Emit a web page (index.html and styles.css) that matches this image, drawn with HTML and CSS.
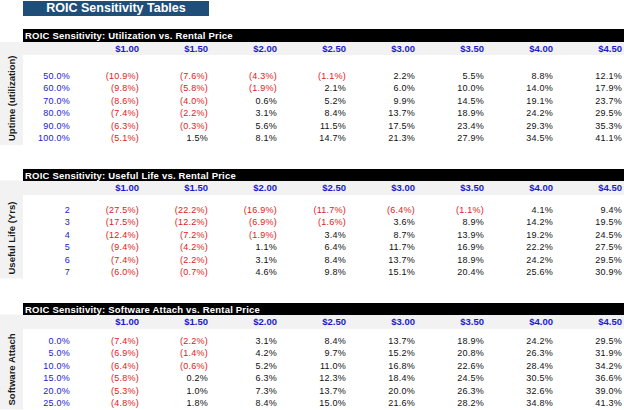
FILE: index.html
```html
<!DOCTYPE html>
<html>
<head>
<meta charset="utf-8">
<link rel="stylesheet" href="styles.css">
</head>
<body>
<div class="title">ROIC Sensitivity Tables</div>

<section class="tbl t1">
  <div class="bar">ROIC Sensitivity: Utilization vs. Rental Price</div>
  <div class="body">
    <div class="side"><span>Uptime (utilization)</span></div>
    <div class="main">
      <div class="prices"><span></span><span>$1.00</span><span>$1.50</span><span>$2.00</span><span>$2.50</span><span>$3.00</span><span>$3.50</span><span>$4.00</span><span>$4.50</span></div>
      <div class="sp sp1"></div>
      <div class="row"><span class="lbl">50.0%</span><span class="neg">(10.9%)</span><span class="neg">(7.6%)</span><span class="neg">(4.3%)</span><span class="neg">(1.1%)</span><span>2.2%</span><span>5.5%</span><span>8.8%</span><span>12.1%</span></div>
      <div class="row"><span class="lbl">60.0%</span><span class="neg">(9.8%)</span><span class="neg">(5.8%)</span><span class="neg">(1.9%)</span><span>2.1%</span><span>6.0%</span><span>10.0%</span><span>14.0%</span><span>17.9%</span></div>
      <div class="row"><span class="lbl">70.0%</span><span class="neg">(8.6%)</span><span class="neg">(4.0%)</span><span>0.6%</span><span>5.2%</span><span>9.9%</span><span>14.5%</span><span>19.1%</span><span>23.7%</span></div>
      <div class="row"><span class="lbl">80.0%</span><span class="neg">(7.4%)</span><span class="neg">(2.2%)</span><span>3.1%</span><span>8.4%</span><span>13.7%</span><span>18.9%</span><span>24.2%</span><span>29.5%</span></div>
      <div class="row"><span class="lbl">90.0%</span><span class="neg">(6.3%)</span><span class="neg">(0.3%)</span><span>5.6%</span><span>11.5%</span><span>17.5%</span><span>23.4%</span><span>29.3%</span><span>35.3%</span></div>
      <div class="row"><span class="lbl">100.0%</span><span class="neg">(5.1%)</span><span>1.5%</span><span>8.1%</span><span>14.7%</span><span>21.3%</span><span>27.9%</span><span>34.5%</span><span>41.1%</span></div>
    </div>
  </div>
</section>

<section class="tbl t2">
  <div class="bar">ROIC Sensitivity: Useful Life vs. Rental Price</div>
  <div class="body">
    <div class="side"><span>Useful Life (Yrs)</span></div>
    <div class="main">
      <div class="prices"><span></span><span>$1.00</span><span>$1.50</span><span>$2.00</span><span>$2.50</span><span>$3.00</span><span>$3.50</span><span>$4.00</span><span>$4.50</span></div>
      <div class="sp sp2"></div>
      <div class="row"><span class="lbl">2</span><span class="neg">(27.5%)</span><span class="neg">(22.2%)</span><span class="neg">(16.9%)</span><span class="neg">(11.7%)</span><span class="neg">(6.4%)</span><span class="neg">(1.1%)</span><span>4.1%</span><span>9.4%</span></div>
      <div class="row"><span class="lbl">3</span><span class="neg">(17.5%)</span><span class="neg">(12.2%)</span><span class="neg">(6.9%)</span><span class="neg">(1.6%)</span><span>3.6%</span><span>8.9%</span><span>14.2%</span><span>19.5%</span></div>
      <div class="row"><span class="lbl">4</span><span class="neg">(12.4%)</span><span class="neg">(7.2%)</span><span class="neg">(1.9%)</span><span>3.4%</span><span>8.7%</span><span>13.9%</span><span>19.2%</span><span>24.5%</span></div>
      <div class="row"><span class="lbl">5</span><span class="neg">(9.4%)</span><span class="neg">(4.2%)</span><span>1.1%</span><span>6.4%</span><span>11.7%</span><span>16.9%</span><span>22.2%</span><span>27.5%</span></div>
      <div class="row"><span class="lbl">6</span><span class="neg">(7.4%)</span><span class="neg">(2.2%)</span><span>3.1%</span><span>8.4%</span><span>13.7%</span><span>18.9%</span><span>24.2%</span><span>29.5%</span></div>
      <div class="row"><span class="lbl">7</span><span class="neg">(6.0%)</span><span class="neg">(0.7%)</span><span>4.6%</span><span>9.8%</span><span>15.1%</span><span>20.4%</span><span>25.6%</span><span>30.9%</span></div>
    </div>
  </div>
</section>

<section class="tbl t3">
  <div class="bar">ROIC Sensitivity: Software Attach vs. Rental Price</div>
  <div class="body">
    <div class="side"><span>Software Attach</span></div>
    <div class="main">
      <div class="prices"><span></span><span>$1.00</span><span>$1.50</span><span>$2.00</span><span>$2.50</span><span>$3.00</span><span>$3.50</span><span>$4.00</span><span>$4.50</span></div>
      <div class="sp sp3"></div>
      <div class="row"><span class="lbl">0.0%</span><span class="neg">(7.4%)</span><span class="neg">(2.2%)</span><span>3.1%</span><span>8.4%</span><span>13.7%</span><span>18.9%</span><span>24.2%</span><span>29.5%</span></div>
      <div class="row"><span class="lbl">5.0%</span><span class="neg">(6.9%)</span><span class="neg">(1.4%)</span><span>4.2%</span><span>9.7%</span><span>15.2%</span><span>20.8%</span><span>26.3%</span><span>31.9%</span></div>
      <div class="row"><span class="lbl">10.0%</span><span class="neg">(6.4%)</span><span class="neg">(0.6%)</span><span>5.2%</span><span>11.0%</span><span>16.8%</span><span>22.6%</span><span>28.4%</span><span>34.2%</span></div>
      <div class="row"><span class="lbl">15.0%</span><span class="neg">(5.8%)</span><span>0.2%</span><span>6.3%</span><span>12.3%</span><span>18.4%</span><span>24.5%</span><span>30.5%</span><span>36.6%</span></div>
      <div class="row"><span class="lbl">20.0%</span><span class="neg">(5.3%)</span><span>1.0%</span><span>7.3%</span><span>13.7%</span><span>20.0%</span><span>26.3%</span><span>32.6%</span><span>39.0%</span></div>
      <div class="row"><span class="lbl">25.0%</span><span class="neg">(4.8%)</span><span>1.8%</span><span>8.4%</span><span>15.0%</span><span>21.6%</span><span>28.2%</span><span>34.8%</span><span>41.3%</span></div>
    </div>
  </div>
</section>
</body>
</html>
```

FILE: styles.css
```css
html, body {
  margin: 0;
  padding: 0;
  background: #ffffff;
}
body {
  width: 624px;
  height: 410px;
  overflow: hidden;
  font-family: "Liberation Sans", Arial, sans-serif;
  color: #111111;
}
.title {
  margin: 1px 0 0 23px;
  width: 186px;
  height: 14.5px;
  background: #1f4e79;
  color: #ffffff;
  font-weight: bold;
  font-size: 12.5px;
  line-height: 14.5px;
  text-align: center;
  white-space: nowrap;
}
.t1 { margin-top: 13.5px; }
.t2, .t3 { margin-top: 24px; }
.bar {
  margin-left: 23px;
  height: 12.5px;
  background: #000000;
  color: #ffffff;
  font-weight: bold;
  font-size: 9.5px;
  letter-spacing: 0.2px;
  line-height: 13px;
  padding-left: 2px;
  white-space: nowrap;
  overflow: hidden;
}
.body {
  display: flex;
}
.side {
  flex: 0 0 23px;
  width: 23px;
  background: #f2f2f2;
  writing-mode: vertical-rl;
  transform: rotate(180deg);
  font-weight: bold;
  font-size: 9.5px;
  line-height: 23px;
  padding-top: 4px;
  box-sizing: border-box;
  text-align: start;
  color: #1a1a1a;
  white-space: nowrap;
}
.main {
  flex: 1;
}
.prices, .row {
  display: grid;
  grid-template-columns: 48px repeat(8, 69px);
}
.prices {
  height: 13.5px;
  background: #f2f2f2;
  font-weight: bold;
  font-size: 9.5px;
  line-height: 14px;
  color: #1a1acc;
}
.prices span, .row span {
  text-align: right;
  padding-right: 1px;
  white-space: nowrap;
}
.sp1 { height: 14.5px; }
.sp2 { height: 9px; }
.sp3 { height: 6px; }
.row {
  height: 12.5px;
  font-size: 9px;
  letter-spacing: 0.25px;
  line-height: 12.5px;
  color: #111111;
}
.row .lbl { color: #1a1acc; }
.row .neg { color: #e02020; }
```
